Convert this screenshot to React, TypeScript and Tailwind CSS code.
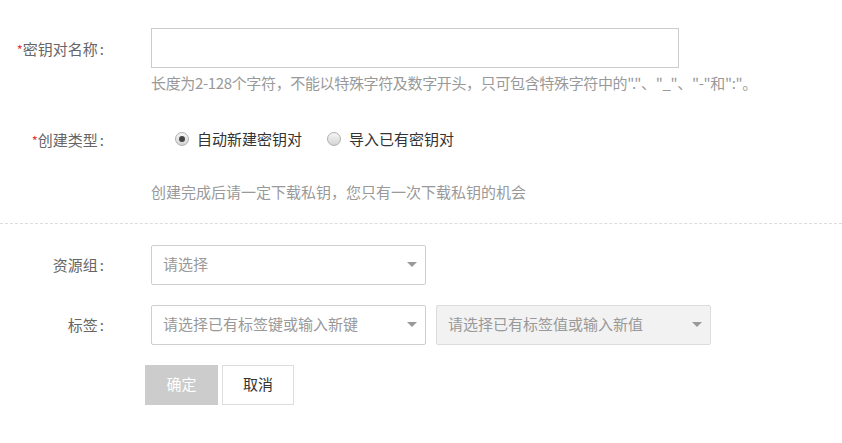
import { useState } from 'react'

const font = { fontFamily: '"Noto Sans CJK SC", "Noto Sans", sans-serif' }

function Caret() {
  return (
    <svg width="10" height="6" viewBox="0 0 10 6" className="shrink-0">
      <path d="M0 0h10L5 5z" fill="#999" />
    </svg>
  )
}

function Label({ text, required }: { text: string; required?: boolean }) {
  return (
    <div className="w-[106px] shrink-0 text-right text-[15px] text-[#666] leading-none">
      {required && <span className="text-[#e4393c] text-[13px]">*</span>}
      {text}
      <span className="ml-[2px] mr-[2px]">:</span>
    </div>
  )
}

function Select({ placeholder, disabled }: { placeholder: string; disabled?: boolean }) {
  return (
    <div
      className={`flex h-[40px] w-[275px] items-center justify-between rounded-[2px] border pl-[11px] pr-[8px] ${
        disabled ? 'border-[#dcdcdc] bg-[#f2f2f2]' : 'border-[#cfcfcf] bg-white'
      }`}
    >
      <span className="text-[15px] text-[#999]">{placeholder}</span>
      <Caret />
    </div>
  )
}

function Radio({ checked, label, onClick }: { checked: boolean; label: string; onClick: () => void }) {
  return (
    <button type="button" onClick={onClick} className="flex items-center gap-[8px]">
      <span className="flex h-[14px] w-[14px] items-center justify-center rounded-full border border-[#b0b0b0] bg-gradient-to-b from-[#f6f6f6] to-[#d4d4d4]">
        {checked && <span className="h-[6px] w-[6px] rounded-full bg-[#444]" />}
      </span>
      <span className="text-[15px] text-[#333]">{label}</span>
    </button>
  )
}

export default function App() {
  const [mode, setMode] = useState<'auto' | 'import'>('auto')
  const [name, setName] = useState('')

  return (
    <div className="min-h-[443px] w-full bg-white pt-[28px]" style={font}>
      {/* 名称 */}
      <div className="flex items-center">
        <Label text="密钥对名称" required />
        <input
          value={name}
          onChange={(e) => setName(e.target.value)}
          className="ml-[45px] h-[40px] w-[528px] border border-[#cccccc] px-3 text-[15px] outline-none"
        />
      </div>
      <p className="ml-[151px] mt-[5px] text-[15px] leading-[20px] tracking-[-0.35px] text-[#999]">
        长度为2-128个字符，不能以特殊字符及数字开头，只可包含特殊字符中的"."、"_"、"-"和":"。
      </p>

      {/* 创建类型 */}
      <div className="mt-[35px] flex items-center">
        <Label text="创建类型" required />
        <div className="ml-[69px] flex items-center gap-[25px]">
          <Radio checked={mode === 'auto'} label="自动新建密钥对" onClick={() => setMode('auto')} />
          <Radio checked={mode === 'import'} label="导入已有密钥对" onClick={() => setMode('import')} />
        </div>
      </div>
      <p className="ml-[151px] mt-[31px] text-[15px] leading-[20px] text-[#999]">
        创建完成后请一定下载私钥，您只有一次下载私钥的机会
      </p>

      <div className="mt-[21px] border-t border-dashed border-[#dddddd]" />

      {/* 资源组 */}
      <div className="mt-[21px] flex items-center">
        <Label text="资源组" />
        <div className="ml-[45px]">
          <Select placeholder="请选择" />
        </div>
      </div>

      {/* 标签 */}
      <div className="mt-[20px] flex items-center">
        <Label text="标签" />
        <div className="ml-[45px] flex gap-[10px]">
          <Select placeholder="请选择已有标签键或输入新键" />
          <Select placeholder="请选择已有标签值或输入新值" disabled />
        </div>
      </div>

      {/* 按钮 */}
      <div className="ml-[145px] mt-[20px] flex gap-[4px]">
        <button type="button" className="h-[40px] w-[73px] bg-[#cccccc] text-[15px] text-white">
          确定
        </button>
        <button type="button" className="h-[40px] w-[72px] border border-[#dddddd] bg-white text-[15px] text-[#333]">
          取消
        </button>
      </div>
    </div>
  )
}
